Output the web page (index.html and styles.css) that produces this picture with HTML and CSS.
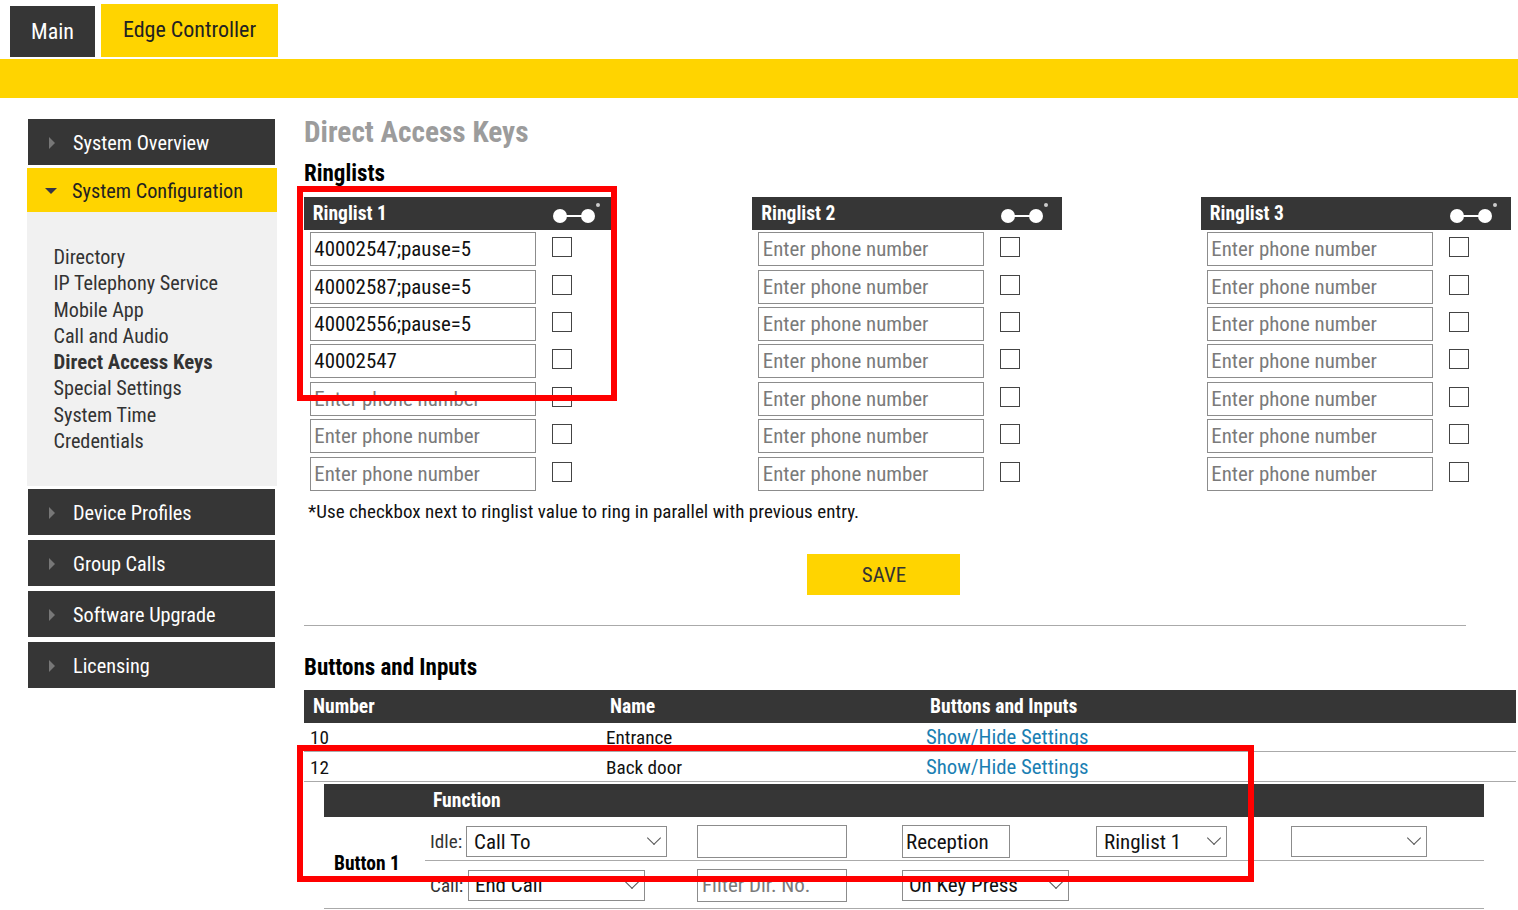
FILE: index.html
```html
<!DOCTYPE html>
<html lang="en">
<head>
    <meta charset="UTF-8">
    <title>Direct Access Keys</title>
    <link rel="stylesheet" href="styles.css">
</head>
<body>
    <div class="tabs">
        <a class="tab tab-main">Main</a>
        <a class="tab tab-edge">Edge Controller</a>
    </div>
    <div class="yellow-bar"></div>

    <div class="page">
        <div class="sidebar">
            <div class="menu-item"><span class="arrow"></span>System Overview</div>
            <div class="menu-item menu-open"><span class="arrow-down"></span>System Configuration</div>
            <div class="submenu">
                <a>Directory</a>
                <a>IP Telephony Service</a>
                <a>Mobile App</a>
                <a>Call and Audio</a>
                <a class="current">Direct Access Keys</a>
                <a>Special Settings</a>
                <a>System Time</a>
                <a>Credentials</a>
            </div>
            <div class="menu-item"><span class="arrow"></span>Device Profiles</div>
            <div class="menu-item"><span class="arrow"></span>Group Calls</div>
            <div class="menu-item"><span class="arrow"></span>Software Upgrade</div>
            <div class="menu-item"><span class="arrow"></span>Licensing</div>
        </div>

        <div class="content">
            <h1>Direct Access Keys</h1>
            <h2>Ringlists</h2>

            <div class="ringlists">
                <div class="ringlist">
                    <div class="ringlist-head">Ringlist 1
                        <svg class="parallel" width="48" height="24" viewBox="0 0 48 24"><circle cx="8" cy="16" r="7" fill="#fff"/><circle cx="36" cy="16" r="7" fill="#fff"/><path d="M8 16H36" stroke="#fff" stroke-width="2"/><circle cx="46" cy="5" r="2" fill="#ccc"/></svg>
                    </div>
                    <div class="ring-row"><input value="40002547;pause=5"><span class="check"></span></div>
                    <div class="ring-row"><input value="40002587;pause=5"><span class="check"></span></div>
                    <div class="ring-row"><input value="40002556;pause=5"><span class="check"></span></div>
                    <div class="ring-row"><input value="40002547"><span class="check"></span></div>
                    <div class="ring-row"><input placeholder="Enter phone number"><span class="check"></span></div>
                    <div class="ring-row"><input placeholder="Enter phone number"><span class="check"></span></div>
                    <div class="ring-row"><input placeholder="Enter phone number"><span class="check"></span></div>
                </div>
                <div class="ringlist">
                    <div class="ringlist-head">Ringlist 2
                        <svg class="parallel" width="48" height="24" viewBox="0 0 48 24"><circle cx="8" cy="16" r="7" fill="#fff"/><circle cx="36" cy="16" r="7" fill="#fff"/><path d="M8 16H36" stroke="#fff" stroke-width="2"/><circle cx="46" cy="5" r="2" fill="#ccc"/></svg>
                    </div>
                    <div class="ring-row"><input placeholder="Enter phone number"><span class="check"></span></div>
                    <div class="ring-row"><input placeholder="Enter phone number"><span class="check"></span></div>
                    <div class="ring-row"><input placeholder="Enter phone number"><span class="check"></span></div>
                    <div class="ring-row"><input placeholder="Enter phone number"><span class="check"></span></div>
                    <div class="ring-row"><input placeholder="Enter phone number"><span class="check"></span></div>
                    <div class="ring-row"><input placeholder="Enter phone number"><span class="check"></span></div>
                    <div class="ring-row"><input placeholder="Enter phone number"><span class="check"></span></div>
                </div>
                <div class="ringlist">
                    <div class="ringlist-head">Ringlist 3
                        <svg class="parallel" width="48" height="24" viewBox="0 0 48 24"><circle cx="8" cy="16" r="7" fill="#fff"/><circle cx="36" cy="16" r="7" fill="#fff"/><path d="M8 16H36" stroke="#fff" stroke-width="2"/><circle cx="46" cy="5" r="2" fill="#ccc"/></svg>
                    </div>
                    <div class="ring-row"><input placeholder="Enter phone number"><span class="check"></span></div>
                    <div class="ring-row"><input placeholder="Enter phone number"><span class="check"></span></div>
                    <div class="ring-row"><input placeholder="Enter phone number"><span class="check"></span></div>
                    <div class="ring-row"><input placeholder="Enter phone number"><span class="check"></span></div>
                    <div class="ring-row"><input placeholder="Enter phone number"><span class="check"></span></div>
                    <div class="ring-row"><input placeholder="Enter phone number"><span class="check"></span></div>
                    <div class="ring-row"><input placeholder="Enter phone number"><span class="check"></span></div>
                </div>
            </div>

            <p class="note">*Use checkbox next to ringlist value to ring in parallel with previous entry.</p>
            <div class="save-wrap"><button class="save">SAVE</button></div>
            <div class="divider"></div>

            <h2 class="buttons-title">Buttons and Inputs</h2>
            <div class="table-head">
                <span class="col-number">Number</span>
                <span class="col-name">Name</span>
                <span>Buttons and Inputs</span>
            </div>
            <div class="table-row">
                <span class="col-number">10</span>
                <span class="col-name">Entrance</span>
                <a class="link">Show/Hide Settings</a>
            </div>
            <div class="table-row">
                <span class="col-number">12</span>
                <span class="col-name">Back door</span>
                <a class="link">Show/Hide Settings</a>
            </div>

            <div class="settings">
                <div class="settings-head">Function</div>
                <div class="settings-body">
                    <div class="button-name">Button 1</div>
                    <div class="settings-rows">
                        <div class="settings-row">
                            <span class="row-label">Idle:</span>
                            <div class="select sel-idle">Call To<span class="chev"></span></div>
                            <div class="box box-filter"></div>
                            <div class="box box-text">Reception</div>
                            <div class="select sel-ring">Ringlist 1<span class="chev"></span></div>
                            <div class="select sel-empty"><span class="chev"></span></div>
                        </div>
                        <div class="settings-row">
                            <span class="row-label">Call:</span>
                            <div class="select sel-call">End Call<span class="chev"></span></div>
                            <div class="box box-filter placeholder">Filter Dir. No.</div>
                            <div class="select sel-key">On Key Press<span class="chev"></span></div>
                        </div>
                    </div>
                </div>
            </div>
        </div>
    </div>

    <div class="highlight highlight-ringlist"></div>
    <div class="highlight highlight-button"></div>
</body>
</html>
```
FILE: styles.css
```css
html, body {
    margin: 0;
    padding: 0;
    height: 910px;
    overflow: hidden;
}

body {
    position: relative;
    font-family: Roboto, 'Liberation Sans', sans-serif;
    font-size: 19.2px;
    font-stretch: 87%;
    color: #111;
    background-color: #fff;
}

.tabs {
    display: flex;
    align-items: flex-end;
    gap: 6px;
    height: 57px;
    padding-left: 10px;
}

.tab {
    display: flex;
    align-items: center;
    justify-content: center;
    font-size: 22px;
}

.tab-main {
    width: 85px;
    height: 51px;
    color: #fff;
    background-color: #363636;
}

.tab-edge {
    width: 177px;
    height: 53px;
    padding-bottom: 3px;
    box-sizing: border-box;
    color: #222;
    background-color: #ffd400;
}

.yellow-bar {
    height: 39px;
    margin-top: 2px;
    background-color: #ffd400;
}

.page {
    display: flex;
    padding-top: 21px;
}

/* left menu */
.sidebar {
    width: 250px;
    margin-left: 27px;
    flex-shrink: 0;
}

.menu-item {
    display: flex;
    align-items: center;
    height: 46px;
    margin: 5px 2px 0 1px;
    padding: 1px 0 0 21px;
    box-sizing: border-box;
    color: #fff;
    font-size: 20.3px;
    background-color: #363636;
}

.menu-item:first-child {
    margin-top: 0;
}

.menu-open {
    height: 44px;
    margin: 3px 0 0 0;
    padding: 2px 0 0 18px;
    color: #222;
    background-color: #ffd400;
}

.arrow {
    width: 0;
    height: 0;
    margin-right: 18px;
    border-left: 6px solid #777;
    border-top: 6px solid transparent;
    border-bottom: 6px solid transparent;
}

.arrow-down {
    width: 0;
    height: 0;
    margin-right: 15px;
    border-top: 6px solid #363648;
    border-left: 6px solid transparent;
    border-right: 6px solid transparent;
}

.submenu {
    display: flex;
    flex-direction: column;
    height: 274px;
    padding: 32px 0 0 26.5px;
    box-sizing: border-box;
    background-color: #f1f1f1;
    margin-bottom: -2px;
}

.submenu a {
    height: 26.3px;
    line-height: 26px;
    color: #333;
    font-size: 20.2px;
}

.submenu .current {
    font-size: 20.8px;
    font-weight: 700;
}

/* content */
.content {
    flex: 1;
    margin-left: 27px;
    min-width: 0;
}

h1 {
    margin: 0;
    height: 27px;
    line-height: 27px;
    color: #9c9c9c;
    font-size: 29.3px;
    font-weight: 700;
}

h2 {
    margin: 16px 0 0 0;
    height: 24px;
    line-height: 24px;
    color: #000;
    font-size: 23px;
    font-weight: 700;
}

.ringlists {
    display: flex;
    gap: 138.5px;
    margin: 11px 0 0 -0.2px;
}

.ringlist {
    width: 310px;
}

.ringlist-head {
    position: relative;
    height: 33px;
    line-height: 33px;
    padding-left: 9px;
    color: #fff;
    font-size: 19.5px;
    font-weight: 700;
    background-color: #363636;
}

.parallel {
    position: absolute;
    left: 248px;
    top: 3px;
}

.ring-row {
    display: flex;
    align-items: center;
    height: 37.4px;
    padding-left: 6px;
}

.ring-row:nth-child(2) {
    margin-top: 0.5px;
}

input {
    width: 226px;
    height: 34px;
    padding: 0 3.5px;
    box-sizing: border-box;
    border: 1px solid #8c8c8c;
    font-family: Roboto, 'Liberation Sans', sans-serif;
    font-size: 20.9px;
    font-stretch: 87%;
    color: #111;
}

input::placeholder {
    color: #7a7a7a;
    opacity: 1;
}

.check {
    width: 18px;
    height: 18px;
    margin: -4px 0 0 16px;
    border: 1px solid #444;
    background-color: #fff;
}

.note {
    margin: 7.5px 0 0 4px;
    height: 24px;
    line-height: 24px;
    font-size: 19px;
    letter-spacing: 0.05px;
}

.save-wrap {
    width: 1158px;
    margin-top: 30px;
    text-align: center;
}

.save {
    width: 153px;
    height: 41px;
    padding: 2px 0 0 2px;
    border: none;
    color: #333;
    font-family: Roboto, 'Liberation Sans', sans-serif;
    font-size: 21px;
    font-stretch: 87%;
    background-color: #ffd400;
}

.divider {
    width: 1162px;
    margin-top: 30px;
    border-top: 1px solid #aaa;
}

.buttons-title {
    margin-top: 30px;
}

.table-head {
    display: flex;
    align-items: center;
    height: 33px;
    margin-top: 10px;
    width: 1212px;
    color: #fff;
    font-size: 19.6px;
    font-weight: 700;
    background-color: #363636;
}

.table-head .col-number {
    width: 297px;
    padding-left: 9px;
    box-sizing: border-box;
}

.table-head .col-name {
    width: 329px;
    padding-left: 9px;
    box-sizing: border-box;
}

.table-row {
    display: flex;
    align-items: flex-end;
    width: 1212px;
    height: 28.5px;
    line-height: 27px;
    border-bottom: 1px solid #aaa;
}

.table-row .col-number {
    width: 302px;
    padding-left: 6px;
    box-sizing: border-box;
}

.table-row .col-name {
    width: 320px;
}

.link {
    color: #1b7fb3;
    font-size: 20.8px;
}

.settings {
    width: 1160px;
    margin: 2px 0 0 20px;
}

.settings-head {
    height: 33px;
    line-height: 33px;
    padding-left: 109px;
    color: #fff;
    font-size: 19.6px;
    font-weight: 700;
    background-color: #363636;
}

.settings-body {
    display: flex;
    border-bottom: 1px solid #aaa;
}

.button-name {
    width: 101px;
    padding: 35px 0 0 10px;
    box-sizing: border-box;
    color: #000;
    font-size: 19.5px;
    font-weight: 700;
}

.settings-rows {
    flex: 1;
}

.settings-row {
    display: flex;
    align-items: center;
    height: 47px;
    padding-top: 2px;
    box-sizing: border-box;
}

.settings-row:first-child {
    height: 44px;
    padding-top: 7px;
    border-bottom: 1px solid #aaa;
}

.row-label {
    width: 35px;
    padding-left: 5px;
    color: #333;
}

.select, .box {
    display: flex;
    align-items: center;
    position: relative;
    height: 31px;
    box-sizing: border-box;
    border: 1px solid #8c8c8c;
    font-size: 21px;
}

.box {
    height: 33px;
    padding-left: 3px;
}

.select {
    padding-left: 7px;
}

.chev {
    position: absolute;
    right: 7px;
    top: 6px;
    width: 9px;
    height: 9px;
    border-right: 1.5px solid #555;
    border-bottom: 1.5px solid #555;
    transform: rotate(45deg);
}

.sel-idle { width: 201px; margin-left: 1px; }
.box-filter { width: 150px; margin-left: 30px; }
.box-text { width: 108px; margin-left: 55px; }
.sel-ring { width: 131px; margin-left: 86px; }
.sel-empty { width: 136px; margin-left: 64px; }
.sel-call { width: 177px; margin-left: 3px; padding-left: 6px; }
.sel-key { width: 167px; margin-left: 55px; padding-left: 6px; }

.sel-call + .box-filter { margin-left: 52px; padding-left: 4px; }

.placeholder {
    color: #7a7a7a;
}

/* red marks over the page */
.highlight {
    position: absolute;
    box-sizing: border-box;
    border: 6px solid #f00;
}

.highlight-ringlist {
    left: 297px;
    top: 186px;
    width: 320px;
    height: 215px;
}

.highlight-button {
    left: 297px;
    top: 745px;
    width: 957px;
    height: 137px;
}
```
